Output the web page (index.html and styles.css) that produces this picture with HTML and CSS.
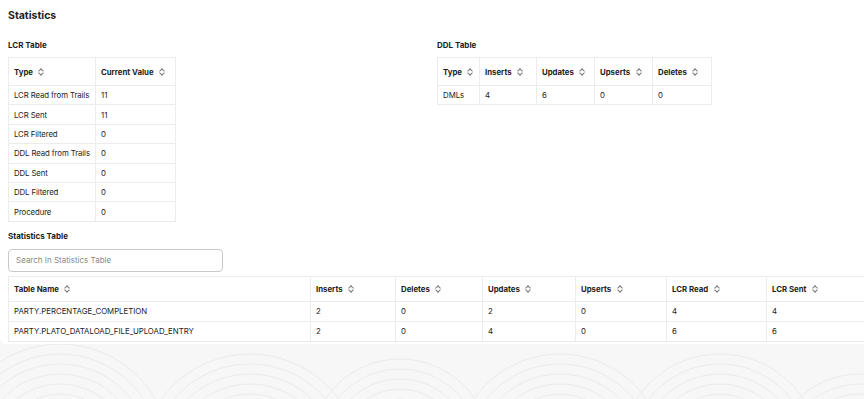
FILE: index.html
```html
<!DOCTYPE html>
<html>
<head>
<meta charset="utf-8">
<link rel="stylesheet" href="styles.css">
</head>
<body>
<div class="panel">
  <h1 class="title">Statistics</h1>
  <div class="top">
    <section>
      <h2 class="sub">LCR Table</h2>
      <table class="tbl lcr">
        <colgroup><col style="width:87px"><col style="width:80px"></colgroup>
        <thead><tr><th><span>Type</span><i class="sort"></i></th><th><span>Current Value</span><i class="sort"></i></th></tr></thead>
        <tbody>
          <tr><td>LCR Read from Trails</td><td>11</td></tr>
          <tr><td>LCR Sent</td><td>11</td></tr>
          <tr><td>LCR Filtered</td><td>0</td></tr>
          <tr><td>DDL Read from Trails</td><td>0</td></tr>
          <tr><td>DDL Sent</td><td>0</td></tr>
          <tr><td>DDL Filtered</td><td>0</td></tr>
          <tr><td>Procedure</td><td>0</td></tr>
        </tbody>
      </table>
    </section>
    <section>
      <h2 class="sub">DDL Table</h2>
      <table class="tbl ddl">
        <colgroup><col style="width:42px"><col style="width:57px"><col style="width:58px"><col style="width:58px"><col style="width:59px"></colgroup>
        <thead><tr><th><span>Type</span><i class="sort"></i></th><th><span>Inserts</span><i class="sort"></i></th><th><span>Updates</span><i class="sort"></i></th><th><span>Upserts</span><i class="sort"></i></th><th><span>Deletes</span><i class="sort"></i></th></tr></thead>
        <tbody>
          <tr><td>DMLs</td><td>4</td><td>6</td><td>0</td><td>0</td></tr>
        </tbody>
      </table>
    </section>
  </div>
  <h2 class="sub stat-title">Statistics Table</h2>
  <input class="search" type="text" placeholder="Search In Statistics Table">
  <table class="tbl big">
    <colgroup><col style="width:302px"><col style="width:85px"><col style="width:87px"><col style="width:93px"><col style="width:91px"><col style="width:100px"><col style="width:110px"></colgroup>
    <thead><tr><th><span>Table Name</span><i class="sort"></i></th><th><span>Inserts</span><i class="sort"></i></th><th><span>Deletes</span><i class="sort"></i></th><th><span>Updates</span><i class="sort"></i></th><th><span>Upserts</span><i class="sort"></i></th><th><span>LCR Read</span><i class="sort"></i></th><th><span>LCR Sent</span><i class="sort"></i></th></tr></thead>
    <tbody>
      <tr><td>PARTY.PERCENTAGE_COMPLETION</td><td>2</td><td>0</td><td>2</td><td>0</td><td>4</td><td>4</td></tr>
      <tr><td>PARTY.PLATO_DATALOAD_FILE_UPLOAD_ENTRY</td><td>2</td><td>0</td><td>4</td><td>0</td><td>6</td><td>6</td></tr>
    </tbody>
  </table>
</div>
<div class="bg">
  <svg width="864" height="55" viewBox="0 0 864 55">
    <g fill="none" stroke="#ebebeb" stroke-width="1">
      <circle cx="60" cy="110" r="50"/><circle cx="60" cy="110" r="60"/><circle cx="60" cy="110" r="70"/><circle cx="60" cy="110" r="80"/><circle cx="60" cy="110" r="90"/><circle cx="60" cy="110" r="100"/><circle cx="60" cy="110" r="110"/>
      <circle cx="250" cy="120" r="60"/><circle cx="250" cy="120" r="70"/><circle cx="250" cy="120" r="80"/><circle cx="250" cy="120" r="90"/><circle cx="250" cy="120" r="100"/><circle cx="250" cy="120" r="110"/>
      <circle cx="400" cy="105" r="50"/><circle cx="400" cy="105" r="60"/><circle cx="400" cy="105" r="70"/><circle cx="400" cy="105" r="80"/><circle cx="400" cy="105" r="90"/>
      <circle cx="560" cy="115" r="55"/><circle cx="560" cy="115" r="65"/><circle cx="560" cy="115" r="75"/><circle cx="560" cy="115" r="85"/><circle cx="560" cy="115" r="95"/><circle cx="560" cy="115" r="105"/>
      <circle cx="720" cy="110" r="50"/><circle cx="720" cy="110" r="60"/><circle cx="720" cy="110" r="70"/><circle cx="720" cy="110" r="80"/><circle cx="720" cy="110" r="90"/><circle cx="720" cy="110" r="100"/>
      <circle cx="860" cy="120" r="60"/><circle cx="860" cy="120" r="70"/><circle cx="860" cy="120" r="80"/><circle cx="860" cy="120" r="90"/>
    </g>
  </svg>
</div>
</body>
</html>
```
FILE: styles.css
```css
* { box-sizing: border-box; }
html, body { margin: 0; padding: 0; }
body {
  width: 864px;
  height: 399px;
  overflow: hidden;
  background: #f7f7f7;
  font-family: Inter, "Noto Sans", sans-serif;
  color: #1d1d1d;
}
.panel {
  background: #fff;
  padding: 8px 0 3px 8px;
  border-bottom-left-radius: 6px;
  height: 344px;
  overflow: hidden;
}
.title {
  margin: 0;
  font-size: 10.5px;
  font-weight: 700;
  line-height: 16px;
}
.top {
  display: grid;
  grid-template-columns: 419px 1fr;
  column-gap: 10px;
  margin-top: 15px;
}
.sub {
  margin: 0 0 6px 0;
  font-size: 8px;
  font-weight: 700;
  line-height: 12px;
}
.stat-title { margin-top: 8px; margin-bottom: 7px; }
.tbl {
  border-collapse: collapse;
  table-layout: fixed;
  font-size: 7.8px;
}
.lcr { width: 167px; }
.ddl { width: 274px; }
.big { width: 868px; }
.tbl th, .tbl td {
  border: 1px solid #ececec;
  text-align: left;
  padding: 0 5px;
  white-space: nowrap;
  overflow: hidden;
}
.tbl th {
  font-weight: 700;
  height: 28px;
}
.tbl td {
  height: 19.4px;
  font-weight: 400;
}
.lcr td:first-child { letter-spacing: -0.1px; }
.tbl th span { vertical-align: middle; }
.sort {
  display: inline-block;
  vertical-align: middle;
  width: 5px;
  height: 8px;
  margin-left: 6px;
  position: relative;
}
.sort::before, .sort::after {
  content: "";
  position: absolute;
  left: 0.5px;
  width: 3px;
  height: 3px;
  border-left: 1px solid #777;
  border-top: 1px solid #777;
}
.sort::before { top: 1px; transform: rotate(45deg); }
.sort::after { bottom: 1px; transform: rotate(225deg); }
.big th { height: 25px; }
.big td { height: 20px; }
.search {
  display: block;
  width: 215px;
  height: 23px;
  border: 1px solid #c9c9c9;
  border-radius: 4px;
  padding: 0 7px;
  font-family: Inter, "Noto Sans", sans-serif;
  font-size: 8px;
  color: #333;
  margin-bottom: 4px;
  outline: none;
}
.search::placeholder { color: #8a8a8a; }
.bg { height: 55px; }
.bg svg { display: block; }
```
